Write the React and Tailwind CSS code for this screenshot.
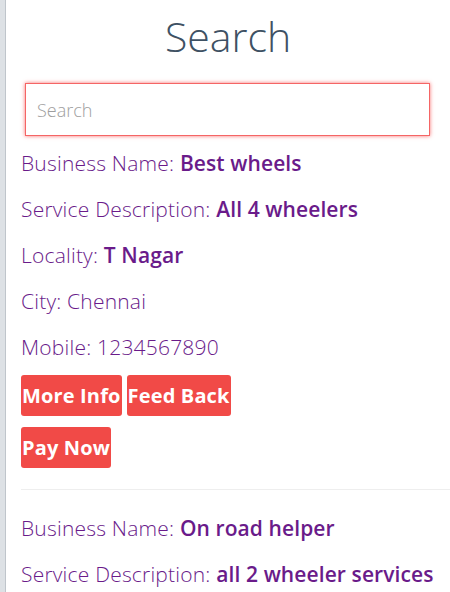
import React from "react";

const font = { fontFamily: '"Open Sans", "Noto Sans", sans-serif' };

function Row({ label, value, bold = true }) {
  return (
    <p className="h-[30px] text-[21px] leading-[30px] mb-4 text-[#6a1b8a] font-light whitespace-nowrap tracking-[0.2px]">
      {label}{" "}
      {bold ? <span className="font-semibold tracking-[0.1px]">{value}</span> : <span>{value}</span>}
    </p>
  );
}

function Btn({ children }) {
  return (
    <button className="h-[41px] px-[1px] rounded-[3px] bg-[#f14a47] text-white text-[20px] font-bold leading-none tracking-[0.15px]">
      {children}
    </button>
  );
}

export default function App() {
  return (
    <div className="flex min-h-[592px] bg-white overflow-hidden" style={font}>
      <div className="w-[6px] shrink-0 bg-[#dde1e5] border-r border-[#bfc5cb]" />
      <div className="flex-1 pl-[15px]">
        <h1 className="text-center text-[41px] leading-[48px] text-[#3e5163] font-light mt-[12px] pr-[15px]">
          Search
        </h1>
        <div className="pl-[4px] pr-[20px] mt-[23px]">
          <input
            placeholder="Search"
            className="w-full h-[53px] border border-[#f56565] shadow-[0_0_4px_#f87171] outline-none px-[11px] text-[18px] placeholder:text-[#9e9e9e] font-light"
          />
        </div>
        <div className="mt-[12px]">
          <Row label="Business Name:" value="Best wheels" />
          <Row label="Service Description:" value="All 4 wheelers" />
          <Row label="Locality:" value="T Nagar" />
          <Row label="City:" value="Chennai" bold={false} />
          <Row label="Mobile:" value="1234567890" bold={false} />
          <div className="flex gap-[5px] -mt-[3px]">
            <Btn>More Info</Btn>
            <Btn>Feed Back</Btn>
          </div>
          <div className="flex mt-[11px]">
            <Btn>Pay Now</Btn>
          </div>
          <hr className="mt-[21px] border-[#eeeeee]" />
          <div className="mt-[23px]">
            <Row label="Business Name:" value="On road helper" />
            <Row label="Service Description:" value="all 2 wheeler services" />
          </div>
        </div>
      </div>
    </div>
  );
}
